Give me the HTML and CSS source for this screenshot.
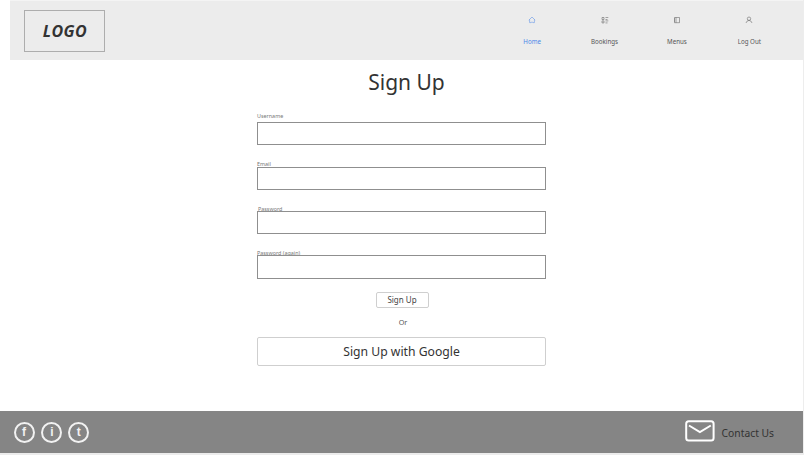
FILE: index.html
```html
<!DOCTYPE html>
<html lang="en">
<head>
<meta charset="utf-8">
<title>Sign Up</title>
<link rel="stylesheet" href="styles.css">
</head>
<body>
<header class="header">
  <a class="logo"><span>LOGO</span></a>
  <nav class="nav">
    <a class="nav-item active">
      <svg class="icon" viewBox="0 0 8 8"><path d="M.8 4.2 4 1l3.2 3.2M1.6 3.6V6.6H3Q4 5.2 5 6.6H6.4V3.6"/></svg>
      <span>Home</span>
    </a>
    <a class="nav-item">
      <svg class="icon" viewBox="0 0 8 8"><path d="M1 1.5h2v2H1zM1 4.9h2v2H1zM4.5 1.5h2.8M4.5 3.5h2M4.5 4.9h2.8M4.5 6.9h2"/></svg>
      <span>Bookings</span>
    </a>
    <a class="nav-item">
      <svg class="icon" viewBox="0 0 8 8"><path d="M1.5 1.5h5v5.2h-5zM3 1.5v5.2M1 3h1M1 5h1"/></svg>
      <span>Menus</span>
    </a>
    <a class="nav-item">
      <svg class="icon" viewBox="0 0 8 8"><circle cx="4" cy="2.7" r="1.7"/><path d="M1 7Q1.5 4.6 4 4.4 6.5 4.6 7 7"/></svg>
      <span>Log Out</span>
    </a>
  </nav>
</header>
<main class="main">
  <h1 class="title">Sign Up</h1>
  <form class="form">
    <label class="field first"><span class="label">Username</span><input class="input" type="text"></label>
    <label class="field second"><span class="label">Email</span><input class="input" type="text"></label>
    <label class="field indent"><span class="label">Password</span><input class="input" type="password"></label>
    <label class="field"><span class="label">Password (again)</span><input class="input tall" type="password"></label>
    <button class="submit" type="button">Sign Up</button>
    <div class="or">Or</div>
    <button class="google" type="button">Sign Up with Google</button>
  </form>
</main>
<footer class="footer">
  <div class="social">
    <a class="social-link">f</a>
    <a class="social-link">i</a>
    <a class="social-link">t</a>
  </div>
  <a class="contact">
    <svg class="mail" viewBox="0 0 30 22"><rect x="1.2" y="1.2" width="27.4" height="19.4" rx="2.5"/><path d="M4 5.5 14.9 12 25.8 5.5"/></svg>
    <span class="contact-text">Contact Us</span>
  </a>
</footer>
</body>
</html>
```
FILE: styles.css
```css
* { box-sizing: border-box; }

body {
  margin: 0;
  width: 804px;
  height: 455px;
  overflow: hidden;
  display: flex;
  flex-direction: column;
  background: #fff;
  border-right: 1px solid #ededed;
  color: #333;
  font-family: "Noto Sans", "Open Sans", sans-serif;
}

.header {
  display: flex;
  justify-content: space-between;
  flex: none;
  height: 60px;
  margin-left: 10px;
  padding: 10px 17.5px 0 14px;
  background: #ececec;
  border-top: 1px solid #f4f4f4;
}

.logo {
  display: flex;
  align-items: center;
  justify-content: center;
  width: 81px;
  height: 42px;
  margin-top: -1px;
  padding-left: 1px;
  border: 1px solid #adadad;
  font: italic 700 16px/20px "Open Sans", "Noto Sans", sans-serif;
  letter-spacing: 0.4px;
}

.nav { display: flex; }

.nav-item {
  display: flex;
  flex-direction: column;
  align-items: center;
  width: 72.4px;
  padding-top: 5px;
  color: #555;
  font-size: 6.2px;
  line-height: 10px;
  white-space: nowrap;
}

.nav-item.active { color: #4a86e8; }

.icon {
  width: 8px;
  height: 8px;
  margin-bottom: 13px;
  fill: none;
  stroke: currentColor;
  stroke-width: 0.5;
}

.main { flex: none; height: 351px; }

.title {
  margin: 0;
  padding-top: 8px;
  padding-left: 10px;
  font-size: 21px;
  font-weight: 400;
  line-height: 29px;
  text-align: center;
}

.form {
  display: flex;
  flex-direction: column;
  width: 289px;
  margin: 15px 0 0 257px;
}

.field {
  display: flex;
  flex-direction: column;
  height: 44px;
  padding-top: 4px;
}

.field.first { padding-top: 0; }

.field.second { height: 45px; }

.label {
  height: 7px;
  color: #777;
  font-size: 5.4px;
  line-height: 8px;
}

.first .label { height: 10px; }

.indent .label {
  height: 6px;
  padding-left: 1px;
}

.input {
  width: 100%;
  height: 23px;
  padding: 2px 6px;
  border: 1px solid #8f8f8f;
  border-radius: 0;
  background: #fff;
  outline: 0;
}

.input.tall {
  height: 24px;
  margin-top: -1px;
}

button {
  padding: 0;
  background: #fff;
  border: 1px solid #cfcfcf;
  border-radius: 2px;
  color: #444;
  font-family: inherit;
}

.submit {
  align-self: center;
  width: 53px;
  height: 16px;
  margin: 3px 0 0 1px;
  font-size: 8px;
  line-height: 14px;
}

.or {
  margin: 8px 0 9px;
  padding-left: 3px;
  font-size: 7.2px;
  line-height: 12px;
  text-align: center;
  color: #555;
}

.google {
  height: 29px;
  color: #333;
  font-size: 12.2px;
  line-height: 27px;
}

.footer {
  display: flex;
  align-items: center;
  justify-content: space-between;
  flex: none;
  height: 44px;
  padding: 0 29px 0 13.5px;
  background: #858585;
  border-bottom: 2px solid #ececec;
}

.social { display: flex; gap: 6px; }

.social-link {
  display: flex;
  align-items: center;
  justify-content: center;
  width: 21px;
  height: 21px;
  border: 2px solid #f2f2f2;
  border-radius: 50%;
  color: #f2f2f2;
  font: 700 12px/17px "Liberation Sans", sans-serif;
}

.social-link:nth-child(2) { margin-left: 0.8px; }

.contact {
  display: flex;
  align-items: center;
  gap: 7px;
  font-size: 10.3px;
}

.contact-text { padding-top: 2px; }

.mail {
  width: 30px;
  height: 22px;
  margin-top: -2px;
  fill: none;
  stroke: #fff;
  stroke-width: 2;
}
```
